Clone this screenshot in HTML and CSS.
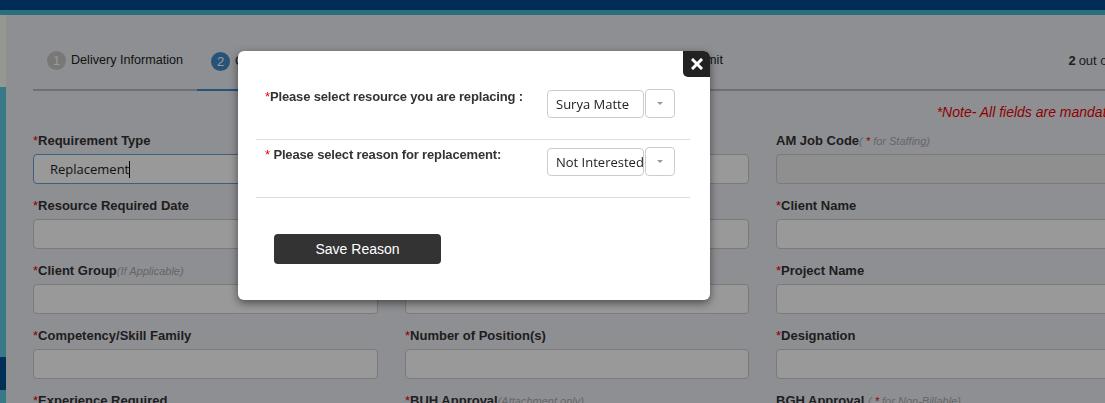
FILE: index.html
```html
<!DOCTYPE html>
<html lang="en">
<head>
<meta charset="utf-8">
<title>Requirement</title>
<link rel="stylesheet" href="styles.css">
</head>
<body>
<div class="topbar"></div>
<div class="accent"></div>
<div class="layout">
  <aside class="sidebar">
    <div class="seg seg-light"></div>
    <div class="seg seg-teal"></div>
    <div class="seg seg-navy"></div>
    <div class="seg seg-teal2"></div>
  </aside>
  <main class="main">
    <nav class="steps">
      <div class="step step-done"><span class="num">1</span>Delivery Information</div>
      <div class="step step-active"><span class="num">2</span>Client &amp; Requirement Details</div>
      <div class="step step-next"><span class="num">3</span>Review &amp; Submit</div>
      <div class="progress"><b>2</b> out of 3</div>
    </nav>
    <p class="note">*Note- All fields are mandatory</p>
    <form class="grid">
      <div class="field"><label><span class="req">*</span>Requirement Type</label><div class="input focus">Replacement<span class="caret"></span></div></div>
      <div class="field"><label><span class="req">*</span>Practice</label><div class="input"></div></div>
      <div class="field"><label>AM Job Code<i class="hint">( <span class="req">*</span> for Staffing)</i></label><div class="input disabled"></div></div>

      <div class="field"><label><span class="req">*</span>Resource Required Date</label><div class="input"></div></div>
      <div class="field"><label><span class="req">*</span>Location</label><div class="input"></div></div>
      <div class="field"><label><span class="req">*</span>Client Name</label><div class="input"></div></div>

      <div class="field"><label><span class="req">*</span>Client Group<i class="hint">(If Applicable)</i></label><div class="input"></div></div>
      <div class="field"><label><span class="req">*</span>Billing Type</label><div class="input"></div></div>
      <div class="field"><label><span class="req">*</span>Project Name</label><div class="input"></div></div>

      <div class="field"><label><span class="req">*</span>Competency/Skill Family</label><div class="input"></div></div>
      <div class="field"><label><span class="req">*</span>Number of Position(s)</label><div class="input"></div></div>
      <div class="field"><label><span class="req">*</span>Designation</label><div class="input"></div></div>

      <div class="field"><label><span class="req">*</span>Experience Required</label><div class="input"></div></div>
      <div class="field"><label><span class="req">*</span>BUH Approval<i class="hint">(Attachment only)</i></label><div class="input"></div></div>
      <div class="field"><label>BGH Approval <i class="hint">( <span class="req">*</span> for Non-Billable)</i></label><div class="input"></div></div>
    </form>
  </main>
</div>

<div class="backdrop"></div>
<div class="modal">
  <button class="close" type="button" aria-label="Close">
    <svg width="12" height="12" viewBox="0 0 12 12"><path d="M2 2 L10 10 M10 2 L2 10" stroke="#fff" stroke-width="3" stroke-linecap="square"/></svg>
  </button>
  <div class="mrow">
    <div class="mlabel"><span class="req">*</span>Please select resource you are replacing :</div>
    <div class="combo"><div class="sel">Surya Matte</div><div class="tog"><span class="tri"></span></div></div>
  </div>
  <div class="mrow">
    <div class="mlabel"><span class="req">*</span> Please select reason for replacement:</div>
    <div class="combo"><div class="sel">Not Interested</div><div class="tog"><span class="tri"></span></div></div>
  </div>
  <div class="mfoot"><button class="save" type="button">Save Reason</button></div>
</div>
</body>
</html>
```

FILE: styles.css
```css
html, body {
  margin: 0;
  padding: 0;
  overflow: hidden;
  height: 403px;
  background: #edeef5;
  font-family: "Liberation Sans", Arial, sans-serif;
  color: #333;
}
.topbar { height: 10px; background: #004b8e; }
.accent { height: 5px; background: #49b9cf; }
.layout { display: flex; align-items: stretch; height: 388px; overflow: hidden; }
.sidebar { width: 6px; flex: none; display: flex; flex-direction: column; }
.seg-light { height: 72px; background: #fbfbf3; }
.seg-teal { height: 270px; background: #60c9df; }
.seg-navy { height: 33px; background: #005093; }
.seg-teal2 { flex: 1; background: #60c9df; }

.main { width: 1100px; flex: none; padding-left: 27px; padding-top: 15px; }

.steps { display: flex; align-items: flex-end; border-bottom: 2px solid #bbb; height: 61px; box-sizing: border-box; font-size: 12.6px; }
.step { display: flex; align-items: center; padding: 3px 0 0 14px; height: 61px; box-sizing: border-box; color: #222; white-space: nowrap; }
.step-done { width: 164px; flex: none; }
.step-active { width: 392px; flex: none; border-bottom: 2px solid #428bca; margin-bottom: -2px; }
.num { width: 19px; height: 19px; border-radius: 50%; display: inline-flex; align-items: center; justify-content: center; margin-right: 5px; color: #fff; font-size: 13px; flex: none; }
.step-done .num, .step-next .num { background: #c8c8c8; }
.step-active .num { background: #428bca; }
.progress { margin-left: auto; height: 61px; padding-top: 3px; box-sizing: border-box; display: flex; align-items: center; gap: 3px; padding-right: 11px; font-size: 13px; white-space: nowrap; }

.note { margin: 11px 0 0; text-align: right; color: #e00; font-style: italic; font-size: 14px; line-height: 20px; padding-right: 7px; white-space: nowrap; }

.grid { display: grid; grid-template-columns: 345px 344px 345px; column-gap: 27px; row-gap: 12px; margin-top: 9px; }
.field label { display: block; font-weight: bold; font-size: 13px; line-height: 20px; white-space: nowrap; }
.req { color: #e00; font-weight: normal; }
.hint { color: #aaa; font-weight: normal; font-size: 11px; }
.input { height: 30px; margin-top: 3px; box-sizing: border-box; border: 1px solid #ccc; border-radius: 4px; background: #fff; font-family: "Open Sans", sans-serif; font-size: 13px; line-height: 28px; padding-left: 16px; color: #222; }
.input.focus { border-color: #6a9fd6; }
.input.disabled { background: #eee; }
.caret { display: inline-block; width: 1px; height: 17px; background: #000; vertical-align: -4px; }

.backdrop { position: fixed; inset: 0; background: rgba(0, 0, 0, 0.4); }
.modal {
  position: absolute; left: 238px; top: 51px; width: 472px; height: 249px;
  box-sizing: border-box; background: #fff; border-radius: 6px;
  box-shadow: 0 3px 9px rgba(0, 0, 0, 0.5);
  padding: 31px 20px 0 18px;
}
.close {
  position: absolute; top: 0; right: 0; width: 27px; height: 26px; border: 0; padding: 0;
  background: #222; border-radius: 0 6px 0 5px; display: flex; align-items: center; justify-content: center;
}
.mrow { display: flex; align-items: flex-start; padding: 6px 15px 21px 9px; border-bottom: 1px solid #ddd; }
.mlabel { width: 282px; flex: none; font-weight: bold; font-size: 13px; letter-spacing: -0.15px; line-height: 18px; color: #333; white-space: nowrap; }
.combo { display: flex; margin-top: 2px; }
.sel { width: 97px; height: 28px; box-sizing: border-box; border: 1px solid #ccc; border-radius: 4px; font-family: "Open Sans", sans-serif; font-size: 13px; line-height: 26px; padding-left: 8px; overflow: hidden; white-space: nowrap; color: #222; }
.tog { width: 30px; height: 29px; margin-top: -1px; margin-left: 1px; box-sizing: border-box; border: 1px solid #ccc; border-radius: 4px; display: flex; align-items: center; justify-content: center; }
.tri { width: 0; height: 0; border-left: 3px solid transparent; border-right: 3px solid transparent; border-top: 3px solid #999; }
.mfoot { padding: 36px 0 0 18px; }
.save { width: 167px; height: 30px; border: 0; border-radius: 4px; background: #333; color: #fff; font-family: "Liberation Sans", Arial, sans-serif; font-size: 14px; }
```
